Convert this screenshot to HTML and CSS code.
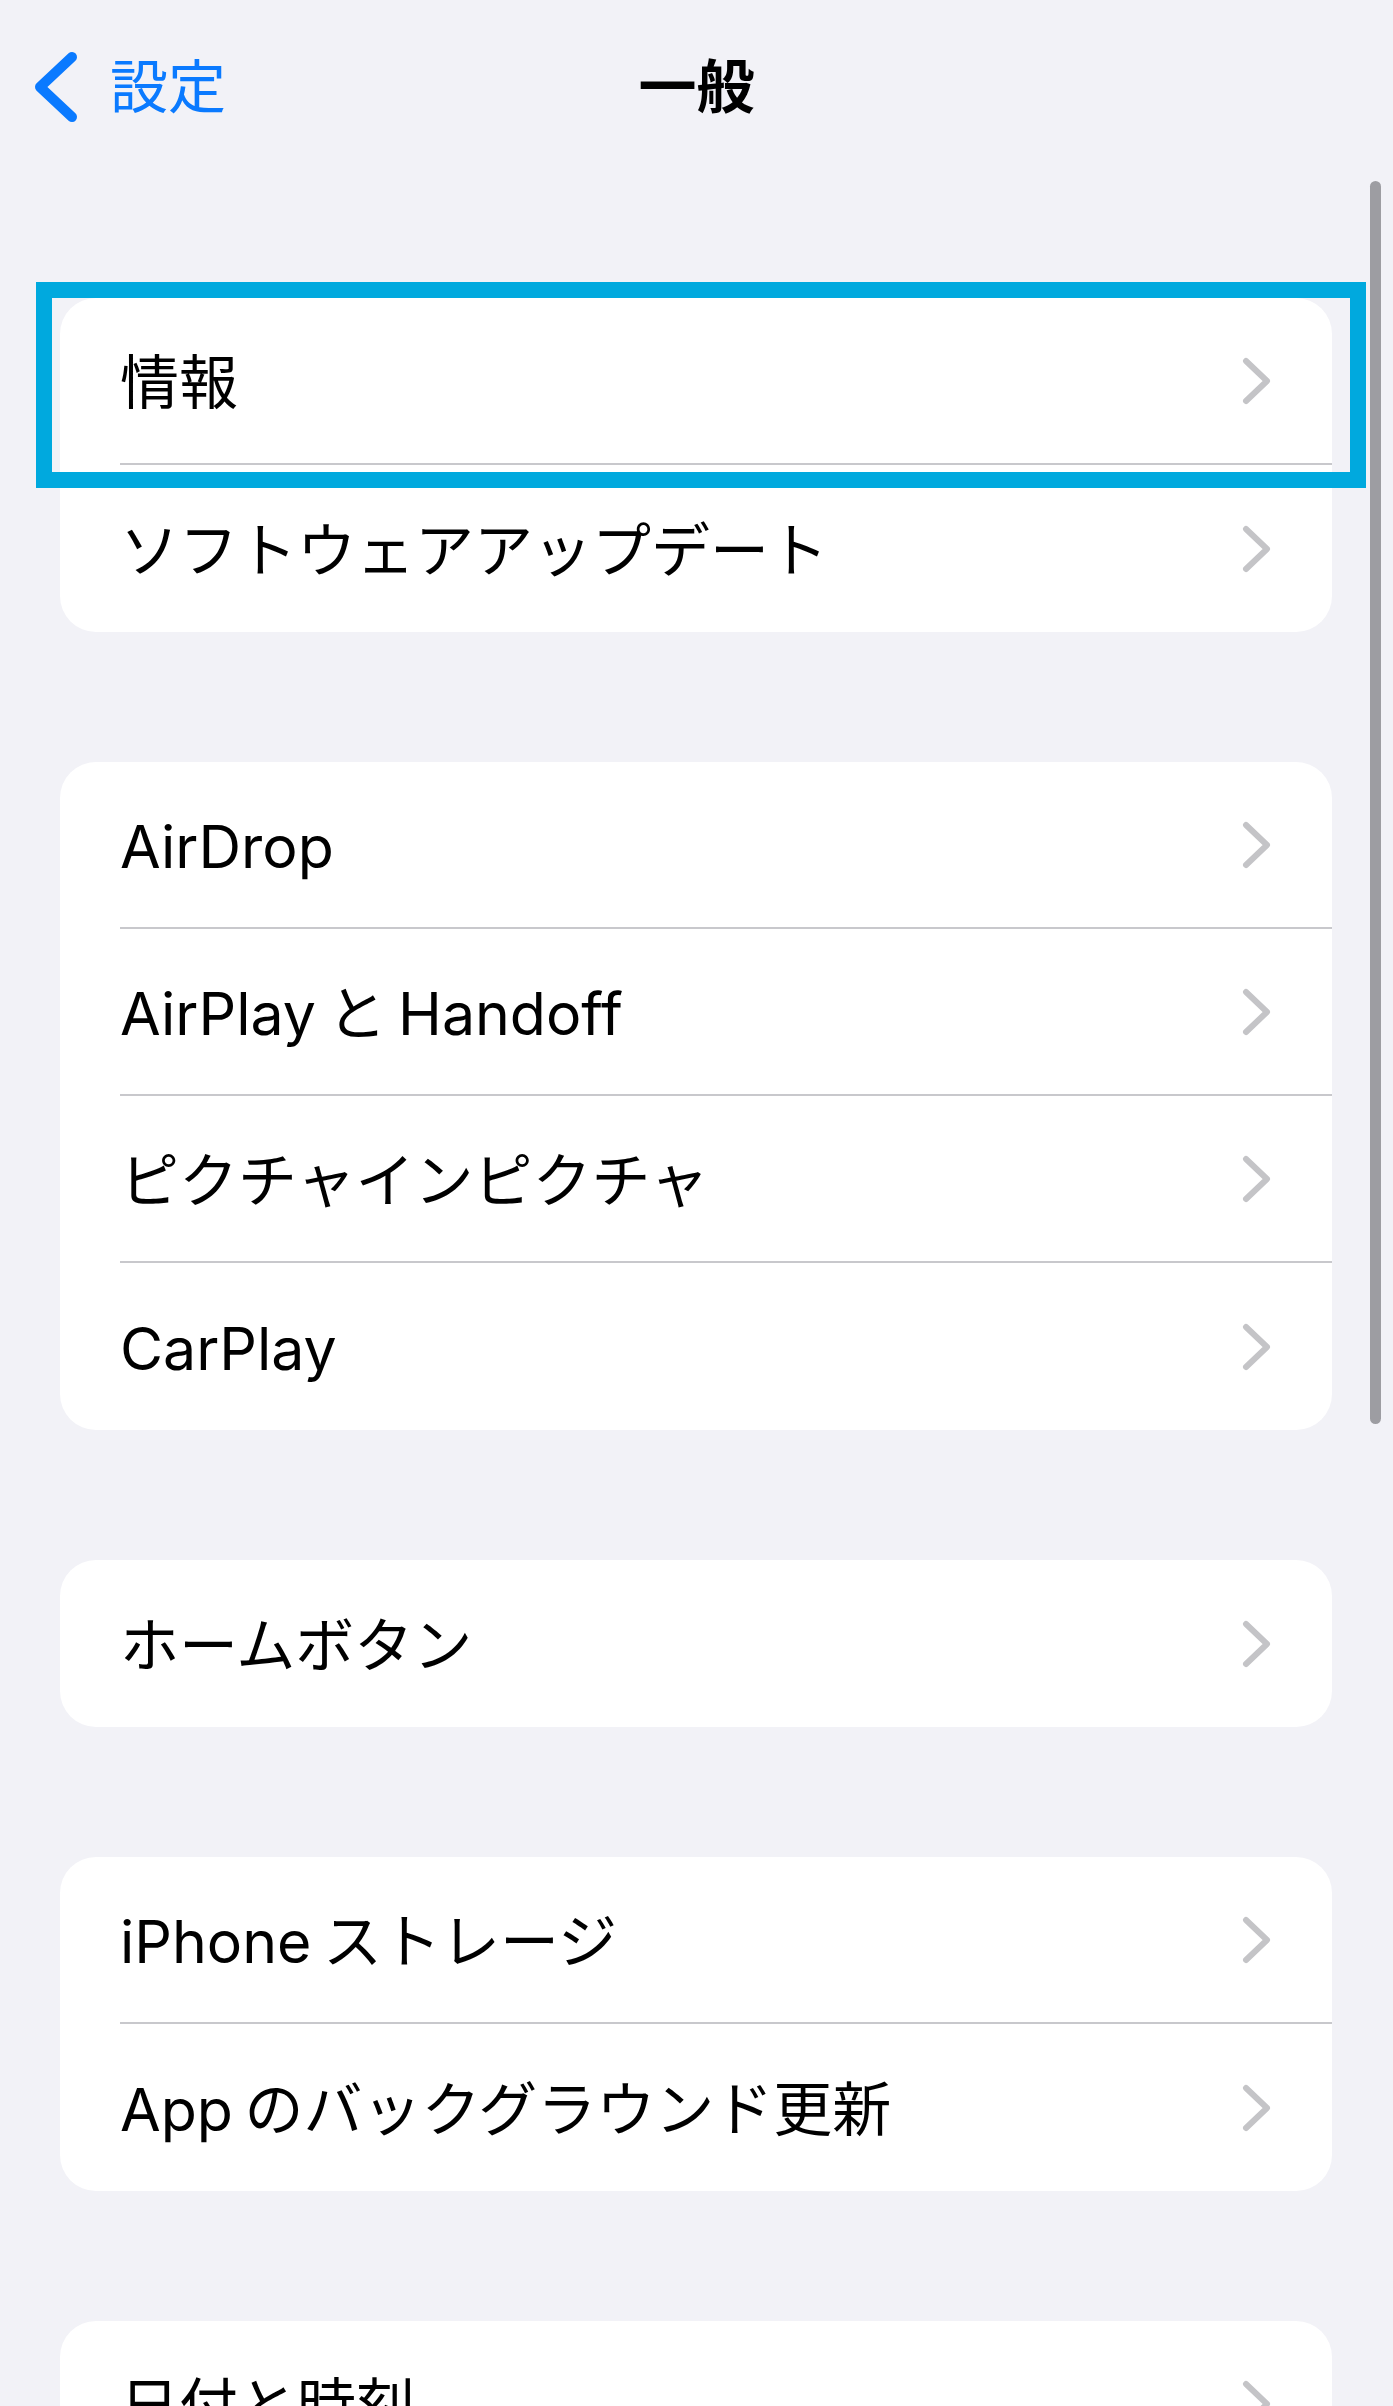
FILE: index.html
```html
<!DOCTYPE html>
<html lang="ja">
  <head>
    <meta charset="UTF-8" />
    <meta name="viewport" content="width=device-width, initial-scale=1.0" />
    <title>一般</title>
    <link rel="stylesheet" href="styles.css">
  </head>
  <body>
    <div class="screen">
      <header class="nav">
        <a class="back" href="#">
          <svg class="back-icon" width="50" height="80" viewBox="0 0 50 80">
            <path d="M42 10 L10 40 L42 70" />
          </svg>
          <span>設定</span>
        </a>
        <h1 class="title">一般</h1>
        <div></div>
      </header>

      <main class="groups">
        <section class="card">
          <div class="row"><div class="row-body"><span>情報</span><svg class="chev" width="30" height="48" viewBox="0 0 30 48"><path d="M4 4 L25 24 L4 44" /></svg></div></div>
          <div class="row"><div class="row-body"><span>ソフトウェアアップデート</span><svg class="chev" width="30" height="48" viewBox="0 0 30 48"><path d="M4 4 L25 24 L4 44" /></svg></div></div>
        </section>

        <section class="card">
          <div class="row"><div class="row-body"><span>AirDrop</span><svg class="chev" width="30" height="48" viewBox="0 0 30 48"><path d="M4 4 L25 24 L4 44" /></svg></div></div>
          <div class="row"><div class="row-body"><span>AirPlay と Handoff</span><svg class="chev" width="30" height="48" viewBox="0 0 30 48"><path d="M4 4 L25 24 L4 44" /></svg></div></div>
          <div class="row"><div class="row-body"><span>ピクチャインピクチャ</span><svg class="chev" width="30" height="48" viewBox="0 0 30 48"><path d="M4 4 L25 24 L4 44" /></svg></div></div>
          <div class="row"><div class="row-body"><span>CarPlay</span><svg class="chev" width="30" height="48" viewBox="0 0 30 48"><path d="M4 4 L25 24 L4 44" /></svg></div></div>
        </section>

        <section class="card">
          <div class="row"><div class="row-body"><span>ホームボタン</span><svg class="chev" width="30" height="48" viewBox="0 0 30 48"><path d="M4 4 L25 24 L4 44" /></svg></div></div>
        </section>

        <section class="card">
          <div class="row"><div class="row-body"><span>iPhone ストレージ</span><svg class="chev" width="30" height="48" viewBox="0 0 30 48"><path d="M4 4 L25 24 L4 44" /></svg></div></div>
          <div class="row"><div class="row-body"><span>App のバックグラウンド更新</span><svg class="chev" width="30" height="48" viewBox="0 0 30 48"><path d="M4 4 L25 24 L4 44" /></svg></div></div>
        </section>

        <section class="card">
          <div class="row"><div class="row-body"><span>日付と時刻</span><svg class="chev" width="30" height="48" viewBox="0 0 30 48"><path d="M4 4 L25 24 L4 44" /></svg></div></div>
          <div class="row"><div class="row-body"><span>キーボード</span><svg class="chev" width="30" height="48" viewBox="0 0 30 48"><path d="M4 4 L25 24 L4 44" /></svg></div></div>
        </section>
      </main>

      <!-- overlays -->
      <div class="highlight"></div>
      <div class="scroll-indicator"></div>
    </div>
  </body>
</html>
```

FILE: styles.css
```css
html,
body {
  margin: 0;
  height: 2406px;
  overflow: hidden;
}
body {
  background-color: #f2f2f7;
  font-family: Inter, "Noto Sans CJK JP", sans-serif;
  color: #000;
}
.screen {
  position: relative;
  height: 100%;
}
.nav {
  height: 174px;
  display: grid;
  grid-template-columns: 1fr auto 1fr;
  align-items: center;
  padding-left: 30px;
}
.back {
  display: flex;
  align-items: center;
  gap: 30px;
  color: #0a7aff;
  text-decoration: none;
  font-size: 58px;
  line-height: 1;
}
.back-icon path {
  fill: none;
  stroke: #0a7aff;
  stroke-width: 10;
  stroke-linecap: round;
  stroke-linejoin: round;
}
.title {
  margin: 0;
  font-size: 58px;
  font-weight: 700;
  line-height: 1;
  padding-right: 30px;
}
.groups {
  display: flex;
  flex-direction: column;
  gap: 130px;
  padding: 124px 61px 0 60px;
}
.card {
  background: #ffffff;
  border-radius: 36px;
  overflow: hidden;
}
.row {
  padding-left: 60px;
}
.row-body {
  height: 165px;
  display: flex;
  align-items: center;
  justify-content: space-between;
  padding-right: 60px;
  border-bottom: 2px solid #c8c8cc;
  font-size: 59px;
  line-height: 1.2;
  word-spacing: -5px;
}
.row:last-child .row-body {
  height: 167px;
  border-bottom: none;
}
.row-body span {
  padding-top: 6px;
}
.chev path {
  fill: none;
  stroke: #c4c4c7;
  stroke-width: 6;
  stroke-linecap: round;
  stroke-linejoin: round;
}
.highlight {
  position: absolute;
  left: 36px;
  top: 282px;
  width: 1330px;
  height: 206px;
  box-sizing: border-box;
  border: 16px solid #00a9de;
}
.scroll-indicator {
  position: absolute;
  left: 1370px;
  top: 181px;
  width: 11px;
  height: 1243px;
  border-radius: 6px;
  background: #9d9da2;
}
```
